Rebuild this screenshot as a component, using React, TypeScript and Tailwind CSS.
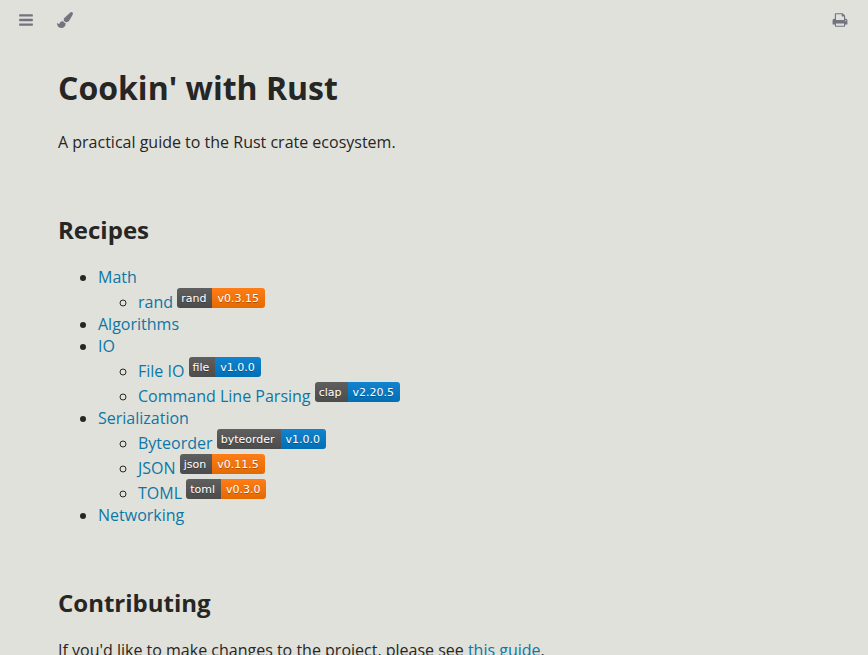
import type { ReactNode } from 'react';

type BadgeColor = 'orange' | 'blue';

interface Crate {
  title: string;
  name: string;
  version: string;
  color: BadgeColor;
}

interface Section {
  title: string;
  crates: Crate[];
}

const sections: Section[] = [
  {
    title: 'Math',
    crates: [{ title: 'rand', name: 'rand', version: 'v0.3.15', color: 'orange' }],
  },
  { title: 'Algorithms', crates: [] },
  {
    title: 'IO',
    crates: [
      { title: 'File IO', name: 'file', version: 'v1.0.0', color: 'blue' },
      { title: 'Command Line Parsing', name: 'clap', version: 'v2.20.5', color: 'blue' },
    ],
  },
  {
    title: 'Serialization',
    crates: [
      { title: 'Byteorder', name: 'byteorder', version: 'v1.0.0', color: 'blue' },
      { title: 'JSON', name: 'json', version: 'v0.11.5', color: 'orange' },
      { title: 'TOML', name: 'toml', version: 'v0.3.0', color: 'orange' },
    ],
  },
  { title: 'Networking', crates: [] },
];

const badgeColors: Record<BadgeColor, string> = {
  orange: 'from-[#fe7d17] to-[#e46a00]',
  blue: 'from-[#1283cf] to-[#006fb5]',
};

const barsPath =
  'M1664 1344v128q0 26-19 45t-45 19h-1408q-26 0-45-19t-19-45v-128q0-26 19-45t45-19h1408q26 0 45 19t19 45zm0-512v128q0 26-19 45t-45 19h-1408q-26 0-45-19t-19-45v-128q0-26 19-45t45-19h1408q26 0 45 19t19 45zm0-512v128q0 26-19 45t-45 19h-1408q-26 0-45-19t-19-45v-128q0-26 19-45t45-19h1408q26 0 45 19t19 45z';
const brushPath =
  'M1615 0q70 0 122.5 46.5t52.5 116.5q0 63-45 151-332 629-465 752-97 91-218 91-126 0-216.5-92.5t-90.5-219.5q0-128 92-212l638-579q59-54 130-54zm-909 1034q39 76 106.5 130t150.5 76l1 71q4 213-129.5 347t-348.5 134q-123 0-218-46.5t-152.5-127.5-86.5-183-29-220q7 5 41 30t62 44.5 59 36.5 46 17q41 0 55-37 25-66 57.5-112.5t69.5-76 88-47.5 103-25.5 125-10.5z';
const printPath =
  'M448 1536h896v-256h-896v256zm0-640h896v-384h-160q-40 0-68-28t-28-68v-160h-640v640zm1152 64q0-26-19-45t-45-19-45 19-19 45 19 45 45 19 45-19 19-45zm128 0v416q0 13-9.5 22.5t-22.5 9.5h-224v160q0 40-28 68t-68 28h-960q-40 0-68-28t-28-68v-160h-224q-13 0-22.5-9.5t-9.5-22.5v-416q0-79 56.5-135.5t135.5-56.5h64v-544q0-40 28-68t68-28h672q40 0 88 20t76 48l152 152q28 28 48 76t20 88v256h64q79 0 135.5 56.5t56.5 135.5z';

function IconButton({ label, path }: { label: string; path: string }) {
  return (
    <button type="button" aria-label={label} className="cursor-pointer text-[#737480] hover:text-[#262625]">
      <svg className="block w-4 h-4" viewBox="0 0 1792 1792" fill="currentColor">
        <path d={path} />
      </svg>
    </button>
  );
}

function Link({ children }: { children: ReactNode }) {
  return (
    <a href="#" className="text-[#0b77a6] hover:underline">
      {children}
    </a>
  );
}

function Badge({ name, version, color }: { name: string; version: string; color: BadgeColor }) {
  return (
    <a
      href="#"
      className="inline-block overflow-hidden rounded-[3px] align-baseline font-['DejaVu_Sans',sans-serif] text-[11px] leading-[22px] text-white text-shadow-[0_1px_0_rgb(1_1_1/0.3)]"
    >
      <span className="flex h-5">
        <span className="bg-linear-to-b from-[#5f5f5f] to-[#4c4c4c] pl-[4px] pr-[6px]">{name}</span>
        <span className={`bg-linear-to-b pl-[5px] pr-[6px] ${badgeColors[color]}`}>{version}</span>
      </span>
    </a>
  );
}

export default function App() {
  return (
    <div className="min-h-screen bg-[#e1e1db] font-['Open_Sans',sans-serif] text-base leading-[22px] text-[#262625]">
      {/* Menu bar */}
      <header className="flex items-center justify-between pl-[18px] pr-5 pt-3 pb-[38px]">
        <div className="flex gap-[23px]">
          <IconButton label="Toggle table of contents" path={barsPath} />
          <IconButton label="Change theme" path={brushPath} />
        </div>
        <IconButton label="Print this book" path={printPath} />
      </header>

      <main className="px-[58px]">
        <h1 className="text-[32px] leading-[44px] font-bold">Cookin' with Rust</h1>
        <p className="mt-[21px]">A practical guide to the Rust crate ecosystem.</p>

        <h2 className="mt-[60px] text-2xl leading-[33px] font-bold">Recipes</h2>
        <ul className="mt-5 list-disc pl-10">
          {sections.map((section) => (
            <li key={section.title}>
              <Link>{section.title}</Link>
              {section.crates.length > 0 && (
                <ul className="list-[circle] pl-10">
                  {section.crates.map((crate) => (
                    <li key={crate.name}>
                      <Link>{crate.title}</Link>{' '}
                      <Badge name={crate.name} version={crate.version} color={crate.color} />
                    </li>
                  ))}
                </ul>
              )}
            </li>
          ))}
        </ul>

        <h2 className="mt-[60px] text-2xl leading-[33px] font-bold">Contributing</h2>
        <p className="mt-5">
          If you'd like to make changes to the project, please see <Link>this guide</Link>.
        </p>
      </main>
    </div>
  );
}
